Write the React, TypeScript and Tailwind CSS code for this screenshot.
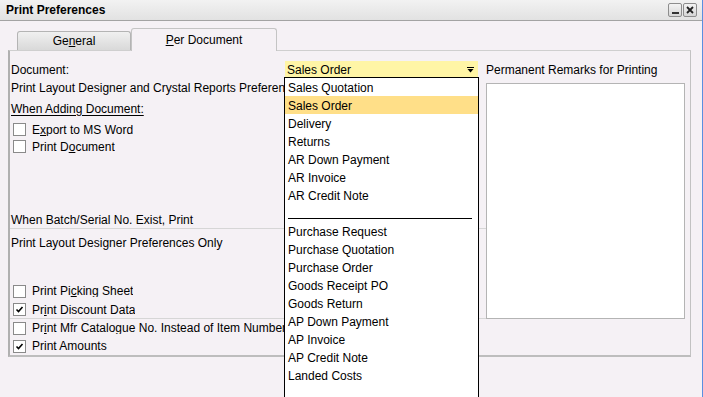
import * as React from "react"

const docItems = [
  "Sales Quotation",
  "Sales Order",
  "Delivery",
  "Returns",
  "AR Down Payment",
  "AR Invoice",
  "AR Credit Note",
  "-",
  "Purchase Request",
  "Purchase Quotation",
  "Purchase Order",
  "Goods Receipt PO",
  "Goods Return",
  "AP Down Payment",
  "AP Invoice",
  "AP Credit Note",
  "Landed Costs",
]

// small checkbox like the old SAP B1 client
const Check = ({ checked }: { checked?: boolean }) => (
  <span className="flex h-[13px] w-[13px] shrink-0 items-center justify-center border border-[#8a8a8a] bg-white">
    {checked && (
      <svg width="9" height="9" viewBox="0 0 9 9">
        <path d="M1.5 4.5 L3.5 6.5 L7.5 2" stroke="#000" strokeWidth="1.6" fill="none" />
      </svg>
    )}
  </span>
)

const CheckRow = ({ checked, h, children }: { checked?: boolean; h: string; children: React.ReactNode }) => (
  <div className={`flex items-center gap-[6px] pl-[3px] whitespace-nowrap ${h}`}>
    <Check checked={checked} />
    <span className="overflow-hidden">{children}</span>
  </div>
)

export default function App() {
  return (
    <div className="relative h-[397px] w-[703px] overflow-hidden border-r border-[#5a8fe0] bg-[#f5f1f5] font-['Liberation_Sans',Arial,sans-serif] text-[12px] leading-none text-black">
      {/* Title bar */}
      <div className="flex h-[21px] items-center justify-between border-b border-[#a3a3a3] bg-gradient-to-b from-[#f2f2f2] to-[#e2e2e2] pl-[6px] pr-[5px]">
        <span className="font-bold">Print Preferences</span>
        <div className="flex gap-[1px]">
          <span className="flex h-[14px] w-[14px] items-end justify-center rounded-[2px] border border-[#8d8d8d] bg-gradient-to-b from-[#f4f4f4] to-[#d6d6d6] pb-[2px]">
            <span className="block h-[2px] w-[7px] bg-[#333]" />
          </span>
          <span className="flex h-[14px] w-[14px] items-center justify-center rounded-[2px] border border-[#8d8d8d] bg-gradient-to-b from-[#f4f4f4] to-[#d6d6d6]">
            <svg width="8" height="8" viewBox="0 0 8 8">
              <path d="M1 1 L7 7 M7 1 L1 7" stroke="#222" strokeWidth="1.8" />
            </svg>
          </span>
        </div>
      </div>

      {/* Tabs */}
      <div className="flex h-[29px] items-end pl-[17px]">
        <div className="flex h-[19px] w-[114px] items-center justify-center rounded-t-[3px] border border-b-0 border-[#b4b4b4] bg-gradient-to-b from-[#f0f0f0] to-[#d9d9d9]">
          <span>
            Ge<span className="underline">n</span>eral
          </span>
        </div>
        <div className="relative z-10 -mb-[1px] flex h-[23px] w-[146px] items-center justify-center rounded-t-[3px] border border-b-0 border-[#c4c4c4] bg-[#f5f1f5]">
          <span>
            <span className="underline">P</span>er Document
          </span>
        </div>
      </div>

      {/* Panel */}
      <div className="ml-[8px] flex h-[307px] w-[683px] border-t border-r border-b-2 border-l-2 border-t-[#cfcfcf] border-r-[#c2c2c2] border-b-[#bdbdbd] border-l-[#b0b0b0]">
        {/* Left column */}
        <div className="flex w-[476px] flex-col pt-[10px]">
          <div className="flex h-[17px] items-center">
            <span className="w-[275px] pl-[1px]">Document:</span>
            <div className="flex h-[17px] w-[193px] items-center justify-between bg-[#fff5a6] pr-[4px] pl-[2px]">
              <span>Sales Order</span>
              <svg width="7" height="6" viewBox="0 0 7 6">
                <path d="M0 0.5 H7" stroke="#000" strokeWidth="1" />
                <path d="M0.5 2 H6.5 L3.5 5.5 Z" fill="#000" />
              </svg>
            </div>
          </div>
          <div className="mt-[1px] flex h-[17px] w-[274px] items-center overflow-hidden whitespace-nowrap pl-[1px]">
            Print Layout Designer and Crystal Reports Preferences
          </div>
          <div className="mt-[4px] flex h-[17px] items-center pl-[1px]">
            <span className="underline underline-offset-2">When Adding Document:</span>
          </div>
          <CheckRow h="mt-[4px] h-[17px]">
            E<span className="underline">x</span>port to MS Word
          </CheckRow>
          <CheckRow h="h-[17px]">
            Print D<span className="underline">o</span>cument
          </CheckRow>
          <div className="mt-[56px] flex h-[18px] items-center border-b border-[#d6d6d6] pl-[1px] whitespace-nowrap">
            When Batch/Serial No. Exist, Print
          </div>
          <div className="mt-[5px] flex h-[17px] items-center pl-[1px] whitespace-nowrap">
            Print Layout Designer Preferences Only
          </div>
          <CheckRow h="mt-[31px] h-[18px]">
            Print Pi<span className="underline">c</span>king Sheet
          </CheckRow>
          <CheckRow checked h="mt-[1px] h-[18px] border-b border-[#d6d6d6]">
            Pr<span className="underline">i</span>nt Discount Data
          </CheckRow>
          <CheckRow h="h-[18px] w-[274px]">
            Pr<span className="underline">i</span>nt Mfr Catalogue No. Instead of Item Number
          </CheckRow>
          <CheckRow checked h="h-[18px]">
            Print Amounts
          </CheckRow>
        </div>

        {/* Right column */}
        <div className="flex flex-1 flex-col pt-[10px]">
          <div className="flex h-[17px] items-center whitespace-nowrap">Permanent Remarks for Printing</div>
          <div className="mt-[5px] h-[236px] w-[199px] border border-[#b4b4b4] bg-white" />
        </div>
      </div>

      {/* Open dropdown list */}
      <div className="absolute top-[77px] left-[284px] z-20 h-[340px] w-[195px] border border-black bg-white">
        {docItems.map((item, i) =>
          item === "-" ? (
            <div key={i} className="flex h-[18px] items-end pb-[3px] pl-[3px]">
              <div className="h-[1px] w-[184px] bg-black" />
            </div>
          ) : (
            <div
              key={i}
              className={`flex h-[18px] items-center pt-[1px] pl-[3px] whitespace-nowrap ${item === "Sales Order" ? "bg-[#ffdf88]" : ""}`}
            >
              {item}
            </div>
          )
        )}
      </div>
    </div>
  )
}
